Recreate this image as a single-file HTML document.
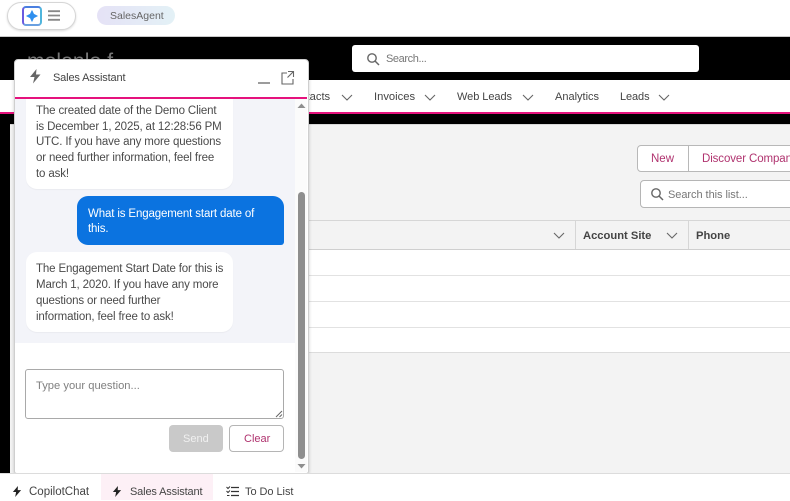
<!DOCTYPE html>
<html><head><meta charset="utf-8">
<style>
html,body{margin:0;padding:0}
body{width:790px;height:500px;position:relative;overflow:hidden;background:#fff;font-family:"Liberation Sans",sans-serif;font-size:12px;color:#444}
div,span.a,svg{position:absolute}
.t{white-space:nowrap}
.line{white-space:nowrap;position:absolute;left:0;font-size:11.5px;letter-spacing:-.14px;color:#4a4a4a}
</style></head><body>
<!-- top bar -->
<div style="left:0;top:0;width:790px;height:36px;background:#fff;border-bottom:1px solid #c9c9c9"></div>
<div style="left:7px;top:2px;width:67px;height:26px;border:1px solid #d6d6d6;border-radius:14px;box-shadow:0 1px 2px rgba(0,0,0,.15);background:#fff"></div>
<div style="left:22px;top:6px;width:16px;height:16px;border:2px solid #4a7fe0;border-radius:4px;border-left-color:#6a5be0;border-right-color:#4fb5dc;border-bottom-color:#6aa0e0"></div>
<svg style="left:26px;top:10px" width="12" height="12" viewBox="0 0 12 12"><path d="M6 0.500 L7.800 4.200 L11.500 6 L7.800 7.800 L6 11.500 L4.200 7.800 L0.500 6 L4.200 4.200Z" fill="#2f8fee" stroke="#2f8fee" stroke-width=".6" stroke-linejoin="round"/></svg>
<svg style="left:48px;top:10px" width="12" height="11" viewBox="0 0 12 11"><path d="M0 1.200h12M0 5.500h12M0 9.800h12" stroke="#888" stroke-width="1.800"/></svg>
<div style="left:97px;top:6px;width:78px;height:19px;border-radius:10px;background:linear-gradient(90deg,#e5e2f6,#e3f1f6)"></div>
<div class="t" style="left:110px;top:10px;font-size:10.5px;color:#666">SalesAgent</div>

<!-- black header -->
<div style="left:0;top:37px;width:790px;height:43px;background:#000"></div>
<div class="t" style="left:27px;top:50px;font-size:21px;color:#777;letter-spacing:.1px">molonlo<span style="color:#c8562a">.</span>f</div>
<div style="left:352px;top:45px;width:347px;height:27px;background:#fff;border-radius:3px"></div>
<svg style="left:366px;top:52px" width="14" height="14" viewBox="0 0 14 14"><circle cx="6" cy="6" r="4.2" fill="none" stroke="#666" stroke-width="1.4"/><path d="M9 9l4 4" stroke="#666" stroke-width="1.5"/></svg>
<div class="t" style="left:386px;top:53px;font-size:11px;letter-spacing:-.4px;color:#777">Search...</div>

<!-- nav -->
<div style="left:0;top:80px;width:790px;height:32px;background:#fff"></div>
<div style="left:0;top:112px;width:790px;height:2px;background:#e5127d"></div>
<div style="left:0;top:114px;width:790px;height:10px;background:#000"></div>
<div class="t" style="left:286px;top:91px;font-size:11.2px;color:#444">Contacts</div>
<div class="t" style="left:374px;top:91px;font-size:11.2px;color:#444">Invoices</div>
<div class="t" style="left:457px;top:91px;font-size:11px;letter-spacing:-.05px;color:#444">Web Leads</div>
<div class="t" style="left:555px;top:91px;font-size:11px;color:#444">Analytics</div>
<div class="t" style="left:620px;top:91px;font-size:11px;letter-spacing:-.1px;color:#444">Leads</div>
<svg style="left:0;top:0" width="790" height="500" viewBox="0 0 790 500"><path d="M342 95l5 5 5-5M425 95l5 5 5-5M523 95l5 5 5-5M659 95l5 5 5-5" fill="none" stroke="#666" stroke-width="1.1"/></svg>

<!-- content -->
<div style="left:0;top:124px;width:790px;height:350px;background:#f3f3f3"></div>
<div style="left:0;top:124px;width:10px;height:350px;background:#000"></div>
<div style="left:10px;top:124px;width:780px;height:1px;background:#d8d8d8"></div>
<div style="left:637px;top:145px;width:51px;height:25px;background:#fff;border:1px solid #b8b8b8;border-radius:4px 0 0 4px"></div>
<div style="left:688px;top:145px;width:110px;height:25px;background:#fff;border:1px solid #b8b8b8"></div>
<div class="t" style="left:651px;top:153px;font-size:11.5px;color:#b0336f">New</div>
<div class="t" style="left:702px;top:153px;font-size:11.5px;letter-spacing:-.1px;color:#b0336f">Discover Companies</div>
<div style="left:640px;top:180px;width:160px;height:26px;background:#fff;border:1px solid #b5b5b5;border-radius:4px"></div>
<svg style="left:650px;top:187px" width="14" height="14" viewBox="0 0 14 14"><circle cx="6" cy="6" r="4.2" fill="none" stroke="#666" stroke-width="1.4"/><path d="M9 9l4 4" stroke="#666" stroke-width="1.5"/></svg>
<div class="t" style="left:668px;top:189px;font-size:11px;letter-spacing:-.05px;color:#777">Search this list...</div>

<!-- table -->
<div style="left:309px;top:220px;width:481px;height:1px;background:#d6d6d6"></div>
<div style="left:309px;top:249px;width:481px;height:1px;background:#cfcfcf"></div>
<div style="left:309px;top:250px;width:481px;height:25px;background:#fff"></div>
<div style="left:309px;top:275px;width:481px;height:1px;background:#e2e2e2"></div>
<div style="left:309px;top:276px;width:481px;height:25px;background:#fff"></div>
<div style="left:309px;top:301px;width:481px;height:1px;background:#e2e2e2"></div>
<div style="left:309px;top:302px;width:481px;height:25px;background:#fff"></div>
<div style="left:309px;top:327px;width:481px;height:1px;background:#e2e2e2"></div>
<div style="left:309px;top:328px;width:481px;height:24px;background:#fff"></div>
<div style="left:309px;top:352px;width:481px;height:1px;background:#dcdcdc"></div>
<div style="left:575px;top:221px;width:1px;height:28px;background:#d6d6d6"></div>
<div style="left:688px;top:221px;width:1px;height:28px;background:#d6d6d6"></div>
<div class="t" style="left:583px;top:230px;font-size:11.2px;font-weight:bold;color:#444">Account Site</div>
<div class="t" style="left:696px;top:230px;font-size:11.2px;font-weight:bold;color:#444">Phone</div>
<svg style="left:0;top:0" width="790" height="500" viewBox="0 0 790 500"><path d="M554 233l5 5 5-5M667 233l5 5 5-5" fill="none" stroke="#666" stroke-width="1.1"/></svg>

<!-- panel -->
<div style="left:14px;top:59px;width:293px;height:413px;background:#fff;border:1px solid #cfcfcf;border-radius:4px 4px 3px 3px;box-shadow:0 1px 3px rgba(0,0,0,.2)"></div>
<svg style="left:29px;top:69px" width="13" height="15" viewBox="0 0 13 15"><path d="M7.500 0 L1 8 H5.500 L4 14.500 L11.500 5.500 H7Z" fill="#666"/></svg>
<div class="t" style="left:53px;top:72px;font-size:11px;letter-spacing:-.15px;color:#444">Sales Assistant</div>
<svg style="left:255px;top:70px" width="40" height="16" viewBox="0 0 40 16"><path d="M3 13h12" stroke="#666" stroke-width="1.300"/><path d="M32 3h-5v11h11v-5" fill="none" stroke="#666" stroke-width="1.100"/><path d="M33 1.500h5.500v5.500M38.500 1.500l-6 6" fill="none" stroke="#666" stroke-width="1.100"/></svg>
<div style="left:15px;top:97px;width:292px;height:1.500px;background:#e5127d"></div>

<!-- messages -->
<div style="left:15px;top:99px;width:280px;height:244px;background:#f3f4f9"></div>
<div style="left:26px;top:99px;width:207px;height:90px;background:#fff;border-radius:0 0 11px 11px;box-shadow:0 1px 1px rgba(0,0,0,.04)"></div>
<div style="left:36px;top:105px;height:80px;width:195px">
<div class="line" style="top:0">The created date of the Demo Client</div>
<div class="line" style="top:16px">is December 1, 2025, at 12:28:56 PM</div>
<div class="line" style="top:31px">UTC. If you have any more questions</div>
<div class="line" style="top:47px">or need further information, feel free</div>
<div class="line" style="top:63px">to ask!</div>
</div>
<div style="left:77px;top:196px;width:207px;height:49px;background:#0b73e0;border-radius:11px 11px 3px 11px"></div>
<div class="line" style="left:88px;top:208px;color:#fff">What is Engagement start date of</div>
<div class="line" style="left:88px;top:223px;color:#fff">this.</div>
<div style="left:26px;top:252px;width:207px;height:80px;background:#fff;border-radius:11px;box-shadow:0 1px 1px rgba(0,0,0,.04)"></div>
<div class="line" style="left:36px;top:263px">The Engagement Start Date for this is</div>
<div class="line" style="left:36px;top:279px">March 1, 2020. If you have any more</div>
<div class="line" style="left:36px;top:295px">questions or need further</div>
<div class="line" style="left:36px;top:311px">information, feel free to ask!</div>

<!-- scrollbar -->
<div style="left:295px;top:99px;width:12px;height:373px;background:#fbfbfb"></div>
<div style="left:298px;top:192px;width:7px;height:267px;background:#8e8e8e;border-radius:4px"></div>
<svg style="left:296px;top:102px" width="11" height="7" viewBox="0 0 11 7"><path d="M1.500 6L5.500 1.500L9.500 6Z" fill="#8e8e8e"/></svg>
<svg style="left:296px;top:463px" width="11" height="7" viewBox="0 0 11 7"><path d="M1.500 1L5.500 5.500L9.500 1Z" fill="#8e8e8e"/></svg>

<!-- input -->
<div style="left:25px;top:369px;width:257px;height:48px;background:#fff;border:1px solid #a9a9a9;border-radius:3px"></div>
<div class="t" style="left:36px;top:380px;font-size:11.2px;color:#808080">Type your question...</div>
<svg style="left:275px;top:410px" width="8" height="8" viewBox="0 0 8 8"><path d="M1 7l6-6M4.500 7l2.500-2.500" stroke="#666" stroke-width="1"/></svg>
<div style="left:169px;top:425px;width:54px;height:27px;background:#c9c9c9;border-radius:4px"></div>
<div class="t" style="left:183px;top:433px;font-size:11px;color:#f0f0f0">Send</div>
<div style="left:229px;top:425px;width:53px;height:25px;background:#fff;border:1px solid #b5b5b5;border-radius:4px"></div>
<div class="t" style="left:244px;top:433px;font-size:11px;color:#b0336f">Clear</div>

<!-- bottom bar -->
<div style="left:0;top:473px;width:790px;height:27px;background:#fff;border-top:1px solid #dcdcdc"></div>
<div style="left:101px;top:474px;width:112px;height:26px;background:#fdf0f6"></div>
<svg style="left:12px;top:486px" width="10" height="11" viewBox="0 0 10 12"><path d="M6 0 L0.500 6.500 H4 L3 12 L9.500 4.500 H5.800Z" fill="#222"/></svg>
<div class="t" style="left:29px;top:486px;font-size:11.5px;color:#444">CopilotChat</div>
<svg style="left:112px;top:486px" width="10" height="11" viewBox="0 0 10 12"><path d="M6 0 L0.500 6.500 H4 L3 12 L9.500 4.500 H5.800Z" fill="#222"/></svg>
<div class="t" style="left:130px;top:486px;font-size:11px;letter-spacing:-.15px;color:#444">Sales Assistant</div>
<svg style="left:226px;top:486px" width="13" height="11" viewBox="0 0 13 11"><path d="M5 1.500h8M5 5.500h8M5 9.500h8" stroke="#333" stroke-width="1.300"/><path d="M0.500 1l1.500 1.500L4 0.500M0.500 5l1.500 1.500L4 4.500M1 9.500h2.500" fill="none" stroke="#333" stroke-width="1"/></svg>
<div class="t" style="left:245px;top:486px;font-size:11px;letter-spacing:-.05px;color:#444">To Do List</div>
</body></html>
